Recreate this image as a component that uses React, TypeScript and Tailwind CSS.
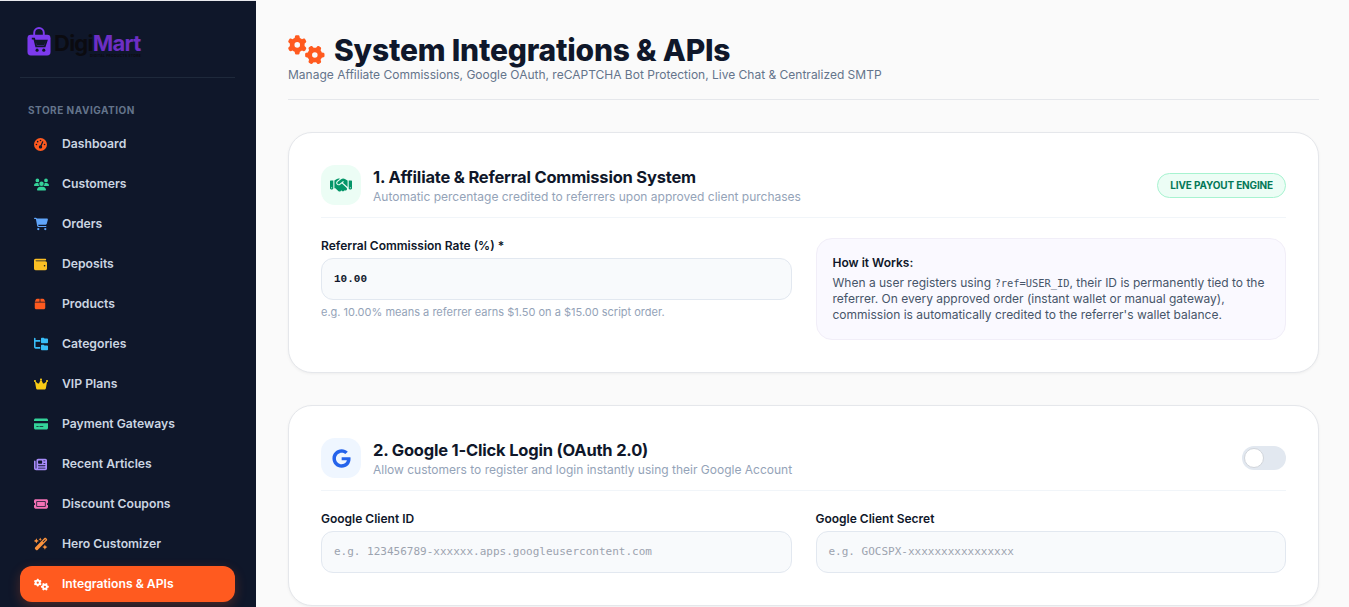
import React from "react";
import {
  FaGears,
  FaGaugeHigh,
  FaUsers,
  FaCartShopping,
  FaWallet,
  FaBox,
  FaFolderTree,
  FaCrown,
  FaCreditCard,
  FaNewspaper,
  FaTicket,
  FaWandMagicSparkles,
  FaHandshake,
  FaGoogle,
} from "react-icons/fa6";

const navItems = [
  { label: "Dashboard", icon: FaGaugeHigh, color: "h-[13px] w-[13px] text-[#ff5a1f]" },
  { label: "Customers", icon: FaUsers, color: "h-[15px] w-[15px] text-[#34d399]" },
  { label: "Orders", icon: FaCartShopping, color: "h-[14px] w-[14px] text-[#60a5fa]" },
  { label: "Deposits", icon: FaWallet, color: "h-[13px] w-[13px] text-[#fbbf24]" },
  { label: "Products", icon: FaBox, color: "h-[12px] w-[12px] text-[#ff5a1f]" },
  { label: "Categories", icon: FaFolderTree, color: "h-[14px] w-[14px] text-[#38bdf8]" },
  { label: "VIP Plans", icon: FaCrown, color: "h-[14px] w-[14px] text-[#facc15]" },
  { label: "Payment Gateways", icon: FaCreditCard, color: "h-[14px] w-[14px] text-[#34d399]" },
  { label: "Recent Articles", icon: FaNewspaper, color: "h-[13px] w-[13px] text-[#a78bfa]" },
  { label: "Discount Coupons", icon: FaTicket, color: "h-[14px] w-[14px] text-[#f472b6]" },
  { label: "Hero Customizer", icon: FaWandMagicSparkles, color: "h-[14px] w-[14px] text-[#fb923c]" },
];

const font = "font-['Inter','Noto_Sans',sans-serif]";
const mono = "font-['DejaVu_Sans_Mono','Liberation_Mono',monospace]";

const Logo = () => (
  <div className="flex h-[32px] items-start">
    <svg width="24" height="29" viewBox="0 0 25 30" className="mt-[1px] shrink-0">
      <path d="M7.5 9V6a5 5 0 0 1 10 0v3" fill="none" stroke="#7c3aed" strokeWidth="2" />
      <rect x="0.5" y="8" width="24" height="21.5" rx="3.5" fill="#7c3aed" />
      <path d="M5 12h2.5l2 8h9l2-6H8.5" fill="none" stroke="#0f172a" strokeWidth="1.8" />
      <path d="M9 14.5h10.5l-1.5 4.5H10z" fill="#0f172a" />
      <circle cx="10.5" cy="24" r="1.6" fill="#0f172a" />
      <circle cx="17.5" cy="24" r="1.6" fill="#0f172a" />
    </svg>
    <div className="ml-[3px] flex w-[87px] flex-col pt-[6px]">
      <div className="text-[22px] leading-[22px] font-bold tracking-[-0.75px] whitespace-nowrap">
        <span className="text-[#0b0b10]">Digi</span>
        <span className="text-[#6d2fc4]">Mart</span>
      </div>
      <div className="flex justify-end text-[3.5px] leading-[5px] font-bold tracking-[0.2px] text-[#0b0b10]">
        DIGITAL PRODUCTS STORE
      </div>
    </div>
  </div>
);

const Sidebar = () => (
  <aside className="flex h-full w-[256px] shrink-0 flex-col overflow-hidden border-t border-[#e9e9ee] bg-[#0f172a] pt-[25px] pr-[21px] pl-[20px]">
    <div className="border-b border-[#1e293b] pb-[19px] pl-[7px]">
      <Logo />
    </div>
    <div className="mt-[26px] pl-[8px] text-[10px] leading-[13px] font-bold tracking-[0.5px] text-[#64748b]">
      STORE NAVIGATION
    </div>
    <nav className="mt-[7px] flex flex-col">
      {navItems.map((item) => (
        <div key={item.label} className="flex h-[40px] items-center pl-[14px] text-[12.2px] font-semibold text-[#cbd5e1]">
          <span className="flex w-[28px] shrink-0 items-center">
            <item.icon className={item.color} />
          </span>
          {item.label}
        </div>
      ))}
      <div className="mt-[2px] flex h-[36px] items-center rounded-[12px] bg-[#ff5a1f] pl-[14px] text-[12.2px] font-semibold text-white shadow-[0_4px_12px_rgba(255,90,31,0.25)]">
        <span className="flex w-[28px] shrink-0 items-center">
          <FaGears className="h-[15px] w-[15px]" />
        </span>
        Integrations &amp; APIs
      </div>
    </nav>
  </aside>
);

const Label = ({ children }: { children: React.ReactNode }) => (
  <div className="text-[12px] leading-[15px] font-semibold text-[#0f172a]">{children}</div>
);

const Field = ({ value, placeholder }: { value?: string; placeholder?: string }) => (
  <div
    className={`mt-[5px] flex h-[42px] items-center rounded-[12px] border border-[#e2e8f0] bg-[#f8fafc] px-[12px] text-[11px] ${
      value ? "font-['Liberation_Mono',monospace] font-bold text-[#0f172a]" : `${mono} text-[#9ca3af]`
    }`}
  >
    {value || placeholder}
  </div>
);

const CardHeader = ({
  icon,
  iconBox,
  title,
  subtitle,
  right,
}: {
  icon: React.ReactNode;
  iconBox: string;
  title: string;
  subtitle: string;
  right: React.ReactNode;
}) => (
  <div className="flex items-center justify-between border-b border-[#f1f5f9] pb-[12px]">
    <div className="flex items-center gap-[12px]">
      <div className={`flex h-[40px] w-[40px] items-center justify-center rounded-[14px] ${iconBox}`}>{icon}</div>
      <div>
        <div className="text-[16.5px] leading-[22px] font-bold tracking-[-0.2px] text-[#0f172a]">{title}</div>
        <div className="mt-[1px] text-[12px] leading-[16px] text-[#94a3b8]">{subtitle}</div>
      </div>
    </div>
    {right}
  </div>
);

export default function App() {
  return (
    <div className={`flex h-screen overflow-hidden bg-[#fafafa] ${font}`}>
      <Sidebar />
      <main className="min-w-0 flex-1 overflow-hidden pt-[31px] pr-[30px] pl-[32px]">
        <div className="border-b border-[#e5e7eb] pb-[17px]">
          <div className="flex h-[36px] items-center">
            <FaGears className="mr-[9px] text-[37px] text-[#ff5a1f]" />
            <h1 className="mt-[2px] text-[30px] leading-[36px] font-extrabold tracking-[-0.2px] text-[#0f172a]">
              System Integrations &amp; APIs
            </h1>
          </div>
          <p className="text-[12px] leading-[15px] text-[#64748b]">
            Manage Affiliate Commissions, Google OAuth, reCAPTCHA Bot Protection, Live Chat &amp; Centralized SMTP
          </p>
        </div>

        <section className="mt-[32px] rounded-[24px] border border-[#e5e7eb] bg-white p-[32px] shadow-[0_1px_3px_rgba(0,0,0,0.05)]">
          <CardHeader
            icon={<FaHandshake className="text-[22px] text-[#059669]" />}
            iconBox="bg-[#ecfdf5]"
            title="1. Affiliate & Referral Commission System"
            subtitle="Automatic percentage credited to referrers upon approved client purchases"
            right={
              <span className="rounded-full border border-[#a7f3d0] bg-[#ecfdf5] px-[12px] py-[5px] text-[10px] leading-[13px] font-bold tracking-[-0.15px] text-[#047857]">
                LIVE PAYOUT ENGINE
              </span>
            }
          />
          <div className="mt-[20px] grid grid-cols-2 gap-[24px]">
            <div>
              <Label>Referral Commission Rate (%) *</Label>
              <Field value="10.00" />
              <p className="mt-[4px] text-[11px] leading-[16px] text-[#94a3b8]">
                e.g. 10.00% means a referrer earns $1.50 on a $15.00 script order.
              </p>
            </div>
            <div className="rounded-[16px] border border-[#f1eef8] bg-[#faf9ff] p-[16px]">
              <div className="mb-[4px] text-[12px] leading-[16px] font-semibold text-[#0f172a]">How it Works:</div>
              <p className="text-[12px] leading-[16px] text-[#475569]">
                When a user registers using <code className={`text-[10.4px] leading-[16px] ${mono}`}>?ref=USER_ID</code>, their ID is permanently tied to the referrer. On every approved order (instant wallet or manual gateway), commission is automatically credited to the referrer's wallet balance.
              </p>
            </div>
          </div>
        </section>

        <section className="mt-[32px] rounded-[24px] border border-[#e5e7eb] bg-white p-[32px] shadow-[0_1px_3px_rgba(0,0,0,0.05)]">
          <CardHeader
            icon={<FaGoogle className="text-[19px] text-[#2563eb]" />}
            iconBox="bg-[#eff6ff]"
            title="2. Google 1-Click Login (OAuth 2.0)"
            subtitle="Allow customers to register and login instantly using their Google Account"
            right={
              <div className="flex h-[24px] w-[44px] items-center rounded-full bg-[#e2e8f0] pl-[2px]">
                <div className="h-[20px] w-[20px] rounded-full border border-[#d1d5db] bg-white" />
              </div>
            }
          />
          <div className="mt-[20px] grid grid-cols-2 gap-[24px]">
            <div>
              <Label>Google Client ID</Label>
              <Field placeholder="e.g. 123456789-xxxxxx.apps.googleusercontent.com" />
            </div>
            <div>
              <Label>Google Client Secret</Label>
              <Field placeholder="e.g. GOCSPX-xxxxxxxxxxxxxxxx" />
            </div>
          </div>
        </section>
      </main>
    </div>
  );
}
